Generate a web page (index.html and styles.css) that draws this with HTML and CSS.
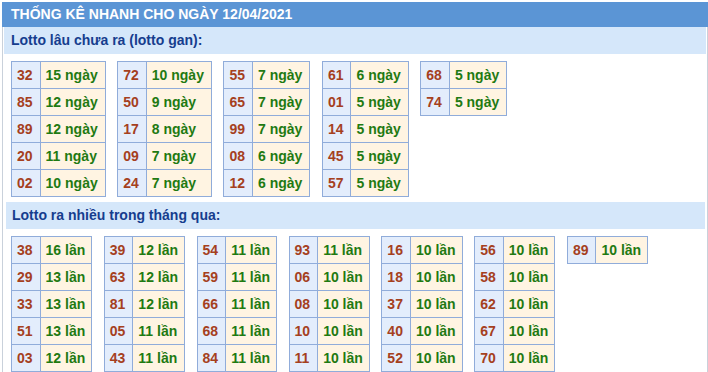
FILE: index.html
```html
<!DOCTYPE html>
<html lang="vi">
<head>
<meta charset="utf-8">
<title>Thống kê nhanh</title>
<link rel="stylesheet" href="styles.css">
</head>
<body>
<div class="box">
  <div class="title">THỐNG KÊ NHANH CHO NGÀY 12/04/2021</div>
  <div class="content">
    <div class="sub">Lotto lâu chưa ra (lotto gan):</div>
    <div class="grid">
      <table>
        <tr><td class="n">32</td><td class="v">15 ngày</td></tr>
        <tr><td class="n">85</td><td class="v">12 ngày</td></tr>
        <tr><td class="n">89</td><td class="v">12 ngày</td></tr>
        <tr><td class="n">20</td><td class="v">11 ngày</td></tr>
        <tr><td class="n">02</td><td class="v">10 ngày</td></tr>
      </table>
      <table>
        <tr><td class="n">72</td><td class="v">10 ngày</td></tr>
        <tr><td class="n">50</td><td class="v">9 ngày</td></tr>
        <tr><td class="n">17</td><td class="v">8 ngày</td></tr>
        <tr><td class="n">09</td><td class="v">7 ngày</td></tr>
        <tr><td class="n">24</td><td class="v">7 ngày</td></tr>
      </table>
      <table>
        <tr><td class="n">55</td><td class="v">7 ngày</td></tr>
        <tr><td class="n">65</td><td class="v">7 ngày</td></tr>
        <tr><td class="n">99</td><td class="v">7 ngày</td></tr>
        <tr><td class="n">08</td><td class="v">6 ngày</td></tr>
        <tr><td class="n">12</td><td class="v">6 ngày</td></tr>
      </table>
      <table>
        <tr><td class="n">61</td><td class="v">6 ngày</td></tr>
        <tr><td class="n">01</td><td class="v">5 ngày</td></tr>
        <tr><td class="n">14</td><td class="v">5 ngày</td></tr>
        <tr><td class="n">45</td><td class="v">5 ngày</td></tr>
        <tr><td class="n">57</td><td class="v">5 ngày</td></tr>
      </table>
      <table>
        <tr><td class="n">68</td><td class="v">5 ngày</td></tr>
        <tr><td class="n">74</td><td class="v">5 ngày</td></tr>
      </table>
    </div>
    <div class="sub sub2">Lotto ra nhiều trong tháng qua:</div>
    <div class="grid grid2">
      <table>
        <tr><td class="n">38</td><td class="v">16 lần</td></tr>
        <tr><td class="n">29</td><td class="v">13 lần</td></tr>
        <tr><td class="n">33</td><td class="v">13 lần</td></tr>
        <tr><td class="n">51</td><td class="v">13 lần</td></tr>
        <tr><td class="n">03</td><td class="v">12 lần</td></tr>
      </table>
      <table>
        <tr><td class="n">39</td><td class="v">12 lần</td></tr>
        <tr><td class="n">63</td><td class="v">12 lần</td></tr>
        <tr><td class="n">81</td><td class="v">12 lần</td></tr>
        <tr><td class="n">05</td><td class="v">11 lần</td></tr>
        <tr><td class="n">43</td><td class="v">11 lần</td></tr>
      </table>
      <table>
        <tr><td class="n">54</td><td class="v">11 lần</td></tr>
        <tr><td class="n">59</td><td class="v">11 lần</td></tr>
        <tr><td class="n">66</td><td class="v">11 lần</td></tr>
        <tr><td class="n">68</td><td class="v">11 lần</td></tr>
        <tr><td class="n">84</td><td class="v">11 lần</td></tr>
      </table>
      <table>
        <tr><td class="n">93</td><td class="v">11 lần</td></tr>
        <tr><td class="n">06</td><td class="v">10 lần</td></tr>
        <tr><td class="n">08</td><td class="v">10 lần</td></tr>
        <tr><td class="n">10</td><td class="v">10 lần</td></tr>
        <tr><td class="n">11</td><td class="v">10 lần</td></tr>
      </table>
      <table>
        <tr><td class="n">16</td><td class="v">10 lần</td></tr>
        <tr><td class="n">18</td><td class="v">10 lần</td></tr>
        <tr><td class="n">37</td><td class="v">10 lần</td></tr>
        <tr><td class="n">40</td><td class="v">10 lần</td></tr>
        <tr><td class="n">52</td><td class="v">10 lần</td></tr>
      </table>
      <table>
        <tr><td class="n">56</td><td class="v">10 lần</td></tr>
        <tr><td class="n">58</td><td class="v">10 lần</td></tr>
        <tr><td class="n">62</td><td class="v">10 lần</td></tr>
        <tr><td class="n">67</td><td class="v">10 lần</td></tr>
        <tr><td class="n">70</td><td class="v">10 lần</td></tr>
      </table>
      <table>
        <tr><td class="n">89</td><td class="v">10 lần</td></tr>
      </table>
    </div>
  </div>
</div>
</body>
</html>
```

FILE: styles.css
```css
html, body {
  margin: 0;
  padding: 0;
  overflow: hidden;
  background: #ffffff;
}

body {
  padding-top: 2px;
  font-family: "Liberation Sans", Arial, sans-serif;
  font-size: 14px;
  font-weight: bold;
}

.box {
  margin-left: 2px;
  width: 706px;
}

.title {
  height: 25px;
  line-height: 25px;
  padding-left: 9px;
  background: #5b95d5;
  color: #ffffff;
}

.content {
  border-left: 1px solid #c9d1db;
  border-right: 1px solid #c9d1db;
  padding: 0 1px;
}

.sub {
  height: 27px;
  line-height: 27px;
  padding-left: 7px;
  background: #d5e7fa;
  color: #163d8e;
}

.sub2 {
  margin: 0 1px 0 2px;
  padding-left: 6px;
}

.grid {
  display: flex;
  align-items: flex-start;
  gap: 11.5px;
  padding-left: 7px;
  margin: 7px 0 5px;
}

.grid2 {
  gap: 11.5px;
  margin-bottom: 0;
}

table {
  border-collapse: collapse;
}

td {
  border: 1px solid #90acda;
  height: 26px;
  line-height: 26px;
  padding: 0 7px 0 5px;
  white-space: nowrap;
}

td.n {
  background: #e3edfc;
  color: #a5401e;
}

td.v {
  background: #fff4e2;
  color: #1f7a12;
}

.grid2 td.v {
  padding-right: 6px;
}
```
